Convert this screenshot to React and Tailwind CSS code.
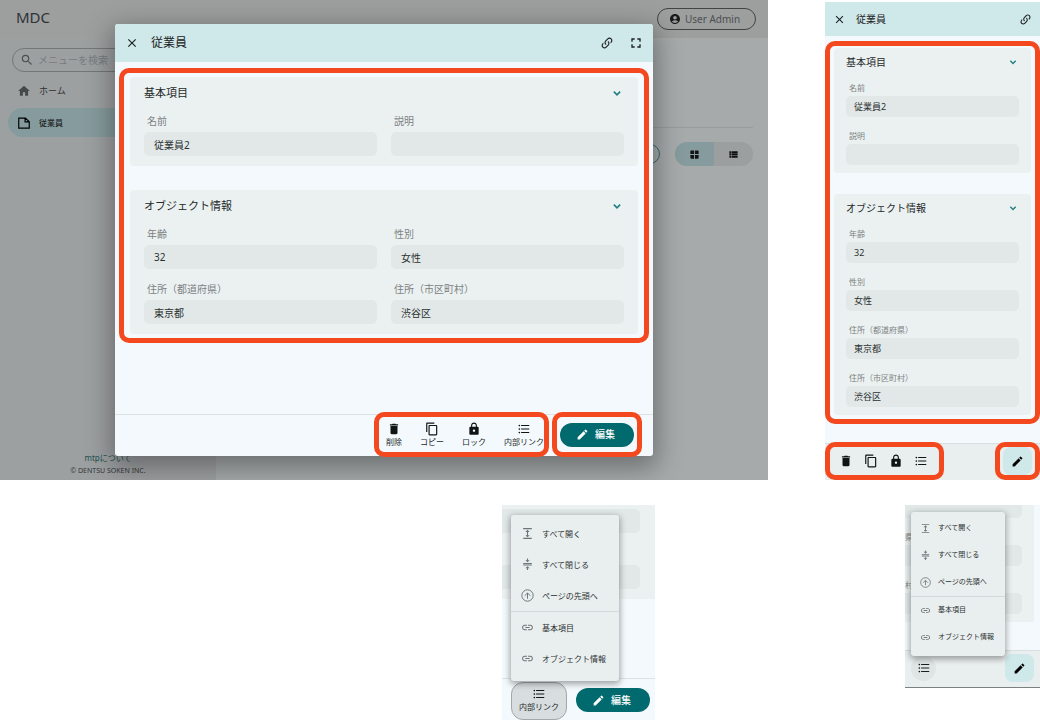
import { useId } from "react";
import {
  MdAccountCircle,
  MdClose,
  MdCompress,
  MdContentCopy,
  MdDelete,
  MdEdit,
  MdExpand,
  MdFormatListBulleted,
  MdFullscreen,
  MdHome,
  MdLink,
  MdLock,
  MdSearch,
  MdViewList,
  MdWindow,
} from "react-icons/md";

const BASIC = [
  { label: "名前", value: "従業員2" },
  { label: "説明", value: "" },
];

const OBJECT_INFO = [
  { label: "年齢", value: "32" },
  { label: "性別", value: "女性" },
  { label: "住所（都道府県）", value: "東京都" },
  { label: "住所（市区町村）", value: "渋谷区" },
];

function LinkVariantIcon({ className }) {
  return (
    <svg viewBox="0 0 24 24" className={className} fill="currentColor" aria-hidden="true">
      <path d="M10.59,13.41C11,13.8 11,14.44 10.59,14.83C10.2,15.22 9.56,15.22 9.17,14.83C7.22,12.88 7.22,9.71 9.17,7.76V7.76L12.71,4.22C14.66,2.27 17.83,2.27 19.78,4.22C21.73,6.17 21.73,9.34 19.78,11.29L18.29,12.78C18.3,11.96 18.17,11.14 17.89,10.36L18.36,9.88C19.54,8.71 19.54,6.81 18.36,5.64C17.19,4.46 15.29,4.46 14.12,5.64L10.59,9.17C9.41,10.34 9.41,12.24 10.59,13.41M13.41,9.17C13.8,8.78 14.44,8.78 14.83,9.17C16.78,11.12 16.78,14.29 14.83,16.24V16.24L11.29,19.78C9.34,21.73 6.17,21.73 4.22,19.78C2.27,17.83 2.27,14.66 4.22,12.71L5.71,11.22C5.7,12.04 5.83,12.86 6.11,13.65L5.64,14.12C4.46,15.29 4.46,17.19 5.64,18.36C6.81,19.54 8.71,19.54 9.88,18.36L13.41,14.83C14.59,13.66 14.59,11.76 13.41,10.59C13,10.2 13,9.56 13.41,9.17Z" />
    </svg>
  );
}

function ChevronIcon({ className }) {
  return (
    <svg viewBox="0 0 24 24" className={className} fill="none" stroke="currentColor" strokeWidth="2.8" aria-hidden="true">
      <path d="M6.6 9.6 12 15l5.4-5.4" />
    </svg>
  );
}

function PageTopIcon({ className }) {
  return (
    <svg viewBox="0 0 24 24" className={className} fill="none" stroke="currentColor" strokeWidth="1.8" aria-hidden="true">
      <circle cx="12" cy="12" r="10.5" />
      <path d="M12 18V7.5M6.8 12.5 12 7.3l5.2 5.2" />
    </svg>
  );
}

function NoteIcon({ className }) {
  return (
    <svg viewBox="0 0 24 24" className={className} fill="none" stroke="currentColor" strokeWidth="2" aria-hidden="true">
      <path d="M3 3.5h11.5l6.5 6.3v11H3zM13.8 3.5v6.7H21" />
    </svg>
  );
}

const SIZES = {
  wide: {
    card: "px-[14px] pt-2 pb-[10px]",
    head: "h-4 text-[11px] leading-4",
    grid: "mt-[13px] grid-cols-2 gap-x-[14px] gap-y-[13px]",
    label: "h-[15px] mb-[3px] pl-[3px] text-[10px] leading-[15px]",
    input: "h-6 rounded-[5px] px-[10px] text-[10px]",
    chevron: "size-[14px]",
  },
  narrow: {
    card: "px-3 pt-[7px] pb-2",
    head: "h-[14px] text-[10px] leading-[14px]",
    grid: "mt-3 grid-cols-1 gap-y-3",
    label: "h-[13px] mb-[2px] pl-[3px] text-[8px] leading-[13px]",
    input: "h-[21px] rounded-[5px] px-2 text-[9px]",
    chevron: "size-3",
  },
  edge: {
    label: "h-[13px] mb-[2px] text-[8px] leading-[13px]",
    input: "h-[21px] rounded-r-[5px]",
  },
};

function Field({ label, value, size }) {
  const id = useId();
  const s = SIZES[size];
  return (
    <div className="flex min-w-0 flex-col">
      <label htmlFor={id} className={`block whitespace-nowrap text-[#7c8182] ${s.label}`}>
        {label}
      </label>
      <input
        id={id}
        readOnly
        defaultValue={value}
        className={`block w-full min-w-0 bg-[#e2e8e8] text-[#2b3031] outline-none ${s.input}`}
      />
    </div>
  );
}

function Section({ title, fields, size }) {
  const s = SIZES[size];
  return (
    <section className={`rounded-sm bg-[#ebf1f1] ${s.card}`}>
      <h3>
        <button type="button" className={`flex w-full items-center justify-between text-[#25292a] ${s.head}`}>
          {title}
          <ChevronIcon className={`text-[#1f7f83] ${s.chevron}`} />
        </button>
      </h3>
      <div className={`grid ${s.grid}`}>
        {fields.map((f) => (
          <Field key={f.label} {...f} size={size} />
        ))}
      </div>
    </section>
  );
}

const ACTIONS = [
  { label: "削除", Icon: MdDelete },
  { label: "コピー", Icon: MdContentCopy },
  { label: "ロック", Icon: MdLock },
  { label: "内部リンク", Icon: MdFormatListBulleted },
];

function EditButton() {
  return (
    <button
      type="button"
      className="flex h-6 w-[74px] items-center justify-center gap-[6px] rounded-full bg-[#016a6e] pr-[3px] text-[10px] font-medium text-white"
    >
      <MdEdit className="size-[13px]" />
      編集
    </button>
  );
}

function SquareEditButton() {
  return (
    <button
      type="button"
      aria-label="編集"
      className="flex h-7 w-[29px] items-center justify-center rounded-lg bg-[#cfe8ea] text-black"
    >
      <MdEdit className="size-[13px]" />
    </button>
  );
}

function DesktopBackdrop() {
  return (
    <div className="col-start-1 row-start-1 flex flex-col bg-[#a6aaab] text-[#2e3233]">
      <header className="flex h-[38px] items-center justify-between bg-[#9d9f9f] pr-3 pl-4">
        <span className="pb-1 text-[15px] leading-5">MDC</span>
        <button
          type="button"
          className="flex h-[22px] w-[99px] items-center justify-center gap-1 rounded-full border border-[#3f4445] pr-1 text-[10px] text-[#4a4f50]"
        >
          <MdAccountCircle className="size-3 text-[#1a1c1c]" />
          User Admin
        </button>
      </header>
      <div className="flex flex-1">
        <aside className="flex w-[216px] flex-col bg-[#9da0a1] px-2 pt-[10px] pb-[3px]">
          <div className="mx-1 flex h-6 items-center gap-1 rounded-full border border-[#727778] px-[7px]">
            <MdSearch className="size-[14px] shrink-0 text-[#4c5152]" />
            <input
              aria-label="メニューを検索"
              placeholder="メニューを検索"
              className="w-full min-w-0 bg-transparent text-[10px] outline-none placeholder:text-[#777c7e]"
            />
          </div>
          <nav className="mt-1 flex flex-col gap-[3px]">
            <a href="#home" className="flex h-[29px] items-center gap-2 pl-[9px] text-[9px]">
              <MdHome className="size-[14px] text-[#45494a]" />
              ホーム
            </a>
            <a href="#employee" className="flex h-[29px] items-center gap-2 rounded-full bg-[#869b9d] pl-[9px] text-[8px] font-medium text-[#1a1c1c]">
              <NoteIcon className="size-[14px] text-black" />
              従業員
            </a>
          </nav>
          <div className="mt-auto flex flex-col items-center">
            <a href="#about" className="text-[8px] leading-[13px] text-[#1c4f52]">
              mtpについて
            </a>
            <small className="text-[7px] leading-[13px] text-[#34383a]">© DENTSU SOKEN INC.</small>
          </div>
        </aside>
        <div className="flex flex-1 flex-col pt-[89px] pr-[15px]">
          <div className="flex items-center justify-end gap-[15px] border-t border-[#979c9d] pt-[14px]">
            <button type="button" aria-label="新規作成" className="h-5 w-20 rounded-full border border-[#386669]" />
            <div className="flex h-6 w-[78px] overflow-hidden rounded-full bg-[#9b9fa0] text-[#111313]">
              <button type="button" aria-label="カード表示" className="flex flex-1 items-center justify-center bg-[#869b9d]">
                <MdWindow className="size-[11px]" />
              </button>
              <button type="button" aria-label="リスト表示" className="flex flex-1 items-center justify-center">
                <MdViewList className="size-[11px]" />
              </button>
            </div>
          </div>
        </div>
      </div>
    </div>
  );
}

function DesktopDialog() {
  return (
    <div
      role="dialog"
      aria-label="従業員"
      className="col-start-1 row-start-1 mt-6 mr-[115px] mb-6 ml-[115px] flex flex-col rounded-[3px] bg-[#f3f9fc] shadow-[0_8px_26px_4px_rgba(0,0,0,0.34)]"
    >
      <header className="flex h-[38px] items-center rounded-t-[3px] bg-[#cfe8ea] pr-[9px] pl-[10px] text-[#1c2122]">
        <button type="button" aria-label="閉じる">
          <MdClose className="size-[14px]" />
        </button>
        <h2 className="ml-3 text-[12px] leading-5">従業員</h2>
        <div className="ml-auto flex items-center gap-[14px]">
          <button type="button" aria-label="リンクをコピー">
            <LinkVariantIcon className="size-[14px]" />
          </button>
          <button type="button" aria-label="全画面表示">
            <MdFullscreen className="size-4" />
          </button>
        </div>
      </header>
      <div className="mx-1 mt-[6px] flex flex-col gap-6 rounded-[10px] border-[5px] border-[#f4481e] px-[6px] pt-1 pb-1">
        <Section title="基本項目" fields={BASIC} size="wide" />
        <Section title="オブジェクト情報" fields={OBJECT_INFO} size="wide" />
      </div>
      <footer className="mt-[71px] flex justify-end gap-[13px] border-t border-[#dde3e5] pt-[2px] pr-4 pb-1">
        <div className="flex h-[35px] items-center gap-[18px] rounded-[5px] pl-[7px] outline-[5px] outline-[#f4481e]">
          {ACTIONS.map(({ label, Icon }) => (
            <button key={label} type="button" className="flex flex-col items-center text-[8px] leading-[11px] text-[#25292a]">
              <Icon className="size-[14px] text-[#111414]" />
              {label}
            </button>
          ))}
        </div>
        <div className="flex h-[35px] items-center rounded-[5px] px-[3px] outline-[5px] outline-[#f4481e]">
          <EditButton />
        </div>
      </footer>
    </div>
  );
}

function MobileDialog() {
  return (
    <div role="dialog" aria-label="従業員" className="mt-[2px] flex flex-col bg-[#f3f9fc]">
      <header className="flex h-[34px] items-center bg-[#cfe8ea] px-2 text-[#1c2122]">
        <button type="button" aria-label="閉じる">
          <MdClose className="size-[13px]" />
        </button>
        <h2 className="ml-[10px] text-[10px] leading-4">従業員</h2>
        <button type="button" aria-label="リンクをコピー" className="ml-auto">
          <LinkVariantIcon className="size-[13px]" />
        </button>
      </header>
      <div className="mt-[5px] flex flex-col gap-[21px] rounded-[10px] border-[5px] border-[#f4481e] px-1 pt-[2px] pb-1">
        <Section title="基本項目" fields={BASIC} size="narrow" />
        <Section title="オブジェクト情報" fields={OBJECT_INFO} size="narrow" />
      </div>
      <footer className="mt-[19px] flex justify-between border-t border-[#d9dfe0] bg-[#e9eeef] px-[5px] pt-[3px] pb-[5px]">
        <div className="flex h-7 items-center rounded-[5px] pr-[6px] pl-[3px] outline-[5px] outline-[#f4481e]">
          {ACTIONS.map(({ label, Icon }) => (
            <button key={label} type="button" aria-label={label} className="flex w-[25px] justify-center text-[#111414]">
              <Icon className="size-[14px]" />
            </button>
          ))}
        </div>
        <div className="flex h-7 items-center rounded-[5px] px-[3px] outline-[5px] outline-[#f4481e]">
          <SquareEditButton />
        </div>
      </footer>
    </div>
  );
}

const MENU_GROUPS = [
  [
    { label: "すべて開く", Icon: MdExpand },
    { label: "すべて閉じる", Icon: MdCompress },
    { label: "ページの先頭へ", Icon: PageTopIcon },
  ],
  [
    { label: "基本項目", Icon: MdLink },
    { label: "オブジェクト情報", Icon: MdLink },
  ],
];

const MENU_SIZES = {
  wide: {
    menu: "top-[10px] left-[9px] w-[108px] pt-[3px] pb-[7px]",
    item: "h-[31px] gap-2 pl-[10px] text-[8px]",
    icon: "size-[13px]",
  },
  narrow: {
    menu: "top-[7px] left-[6px] w-[94px] pt-[3px] pb-[5px]",
    item: "h-[27px] gap-[7px] pl-[9px] text-[7px]",
    icon: "size-[11px]",
  },
};

function LinkMenu({ size }) {
  const s = MENU_SIZES[size];
  return (
    <div role="menu" className={`absolute rounded-[3px] bg-[#e9eeef] text-[#2b3031] shadow-[0_2px_6px_1px_rgba(0,0,0,0.35)] ${s.menu}`}>
      {MENU_GROUPS.map((group, i) => (
        <div key={i} className={i > 0 ? "border-t border-[#d3d9da]" : ""}>
          {group.map(({ label, Icon }) => (
            <button key={label} type="button" role="menuitem" className={`flex w-full items-center whitespace-nowrap ${s.item}`}>
              <Icon className={`shrink-0 text-[#6f7576] ${s.icon}`} />
              {label}
            </button>
          ))}
        </div>
      ))}
    </div>
  );
}

function DesktopMenuFigure() {
  return (
    <div className="relative flex w-[153px] flex-col overflow-hidden bg-[#f3f9fc]">
      <div className="flex flex-col gap-8 bg-[#ebf1f1] pt-1 pr-[15px] pb-[10px]">
        <input readOnly aria-label="性別" className="h-6 w-full rounded-r-[5px] bg-[#e2e8e8] outline-none" />
        <input readOnly aria-label="住所（市区町村）" className="h-6 w-full rounded-r-[5px] bg-[#e2e8e8] outline-none" />
      </div>
      <footer className="mt-[79px] flex items-start justify-between border-t border-[#dde3e5] pt-[3px] pr-[5px] pb-[1px] pl-[9px]">
        <button
          type="button"
          className="flex h-[38px] w-14 flex-col items-center justify-center rounded-xl border border-[#a3a8a9] bg-[#d8dddf] pb-1 text-[8px] leading-[11px] text-[#25292a]"
        >
          <MdFormatListBulleted className="size-[14px] text-[#111414]" />
          内部リンク
        </button>
        <div className="pt-[6px]">
          <EditButton />
        </div>
      </footer>
      <LinkMenu size="wide" />
    </div>
  );
}

function MobileMenuFigure() {
  return (
    <div className="relative flex w-[135px] flex-col self-start border-b border-[#7d7f80] bg-[#f3f9fc]">
      <div className="mr-[6px] flex flex-col gap-3 bg-[#ebf1f1] pr-3 pb-2">
        <div className="h-[13px] rounded-br-[5px] bg-[#e2e8e8]" />
        <Field label="県）" value="" size="edge" />
        <Field label="村）" value="" size="edge" />
      </div>
      <footer className="mt-7 flex items-center justify-between border-t border-[#d9dfe0] bg-[#e9eeef] px-[6px] pt-[3px] pb-[5px]">
        <button
          type="button"
          aria-label="内部リンク"
          className="flex size-[25px] items-center justify-center rounded-full bg-[#dfe5e5] text-[#1a1e1f]"
        >
          <MdFormatListBulleted className="size-[14px]" />
        </button>
        <SquareEditButton />
      </footer>
      <LinkMenu size="narrow" />
    </div>
  );
}

export default function App() {
  return (
    <main className="grid grid-cols-[minmax(0,768fr)_minmax(0,215fr)] gap-x-[57px] gap-y-[25px] bg-white font-['Noto_Sans','Noto_Sans_CJK_JP',sans-serif]">
      <div className="grid grid-cols-1 overflow-hidden">
        <DesktopBackdrop />
        <DesktopDialog />
      </div>
      <MobileDialog />
      <div className="flex justify-end pr-[113px]">
        <DesktopMenuFigure />
      </div>
      <div className="flex justify-end">
        <MobileMenuFigure />
      </div>
    </main>
  );
}
